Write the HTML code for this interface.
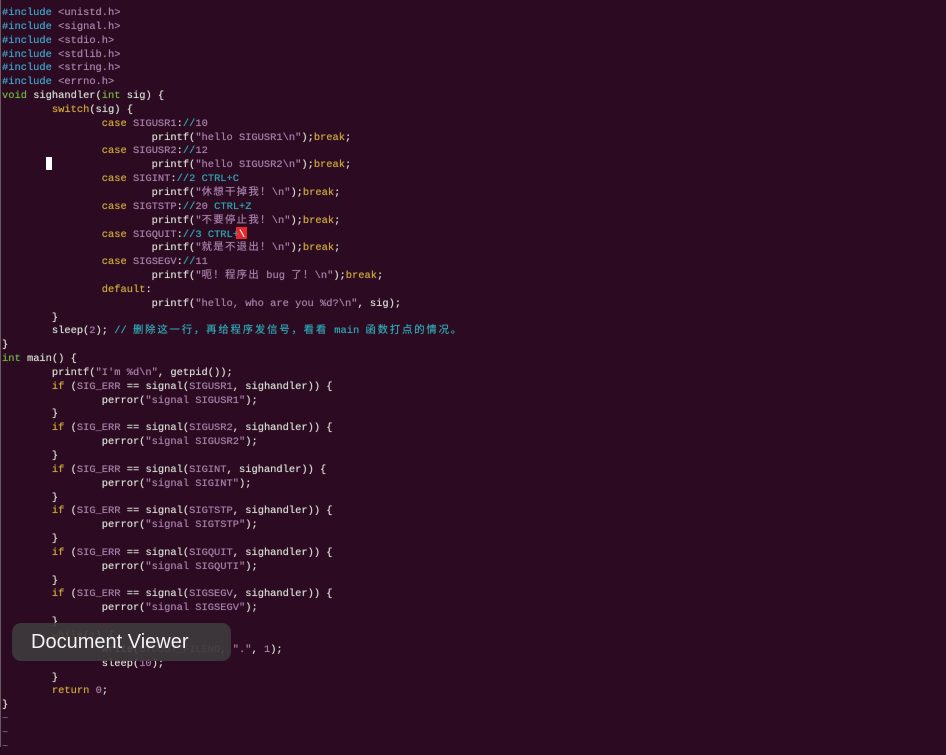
<!DOCTYPE html>
<html><head><meta charset="utf-8"><style>
html,body{margin:0;padding:0;}
body{width:946px;height:747px;background:#2c0b22;position:relative;overflow:hidden;}
.edge{position:absolute;left:0;top:0;width:1px;height:747px;background:#6b5a66;}
pre{position:absolute;left:2px;top:7px;margin:0;font-family:"Liberation Mono","Noto Sans CJK SC",monospace;font-size:10.4px;line-height:13.84px;color:#d3d7cf;text-shadow:0 0 0.6px currentColor;}
.p{color:#3f9fc6}.h{color:#a77fa8}.t{color:#6db33f}.k{color:#c8a43a}.s{color:#a37ca6}.m{color:#2fa3b0}.c{letter-spacing:1.8px}.d{letter-spacing:1.3px}.g{color:#6a5a8a}
.cur{position:absolute;left:46px;top:157px;width:6px;height:13px;background:#fff;}
.red{position:absolute;left:236px;top:227px;width:11px;height:12px;background:#e8272a;}
.tip{position:absolute;left:12px;top:623px;width:219px;height:38px;border-radius:9px;background:rgba(62,58,60,0.9);color:#f2f2f2;font-family:"Liberation Sans","DejaVu Sans",sans-serif;font-size:20px;line-height:38px;padding-left:19px;box-sizing:border-box;}
</style></head><body>
<div class="edge"></div>
<div class="red"></div>
<pre><span class="p">#include</span> <span class="h">&lt;unistd.h&gt;</span>
<span class="p">#include</span> <span class="h">&lt;signal.h&gt;</span>
<span class="p">#include</span> <span class="h">&lt;stdio.h&gt;</span>
<span class="p">#include</span> <span class="h">&lt;stdlib.h&gt;</span>
<span class="p">#include</span> <span class="h">&lt;string.h&gt;</span>
<span class="p">#include</span> <span class="h">&lt;errno.h&gt;</span>
<span class="t">void</span> sighandler(<span class="t">int</span> sig) {
        <span class="k">switch</span>(sig) {
                <span class="k">case</span> <span class="s">SIGUSR1</span>:<span class="m">//</span><span class="s">10</span>
                        printf(<span class="s">"hello SIGUSR1\n"</span>);<span class="k">break</span>;
                <span class="k">case</span> <span class="s">SIGUSR2</span>:<span class="m">//</span><span class="s">12</span>
                        printf(<span class="s">"hello SIGUSR2\n"</span>);<span class="k">break</span>;
                <span class="k">case</span> <span class="s">SIGINT</span>:<span class="m">//2 CTRL+C</span>
                        printf(<span class="s">"<span class="d">休想干掉我！</span>\n"</span>);<span class="k">break</span>;
                <span class="k">case</span> <span class="s">SIGTSTP</span>:<span class="m">//</span><span class="s">20</span> <span class="m">CTRL+Z</span>
                        printf(<span class="s">"<span class="d">不要停止我！</span>\n"</span>);<span class="k">break</span>;
                <span class="k">case</span> <span class="s">SIGQUIT</span>:<span class="m">//3 CTRL+</span><span style="color:#fff">\</span>
                        printf(<span class="s">"<span class="d">就是不退出！</span>\n"</span>);<span class="k">break</span>;
                <span class="k">case</span> <span class="s">SIGSEGV</span>:<span class="m">//</span><span class="s">11</span>
                        printf(<span class="s">"<span class="d">呃！程序出</span> bug <span class="d">了！</span>\n"</span>);<span class="k">break</span>;
                <span class="k">default</span>:
                        printf(<span class="s">"hello, who are you %d?\n"</span>, sig);
        }
        sleep(<span class="s">2</span>); <span class="m">// <span class="c">删除这一行，再给程序发信号，看看</span> main <span class="c">函数打点的情况。</span></span>
}
<span class="t">int</span> main() {
        printf(<span class="s">"I'm %d\n"</span>, getpid());
        <span class="k">if</span> (<span class="s">SIG_ERR</span> == signal(<span class="s">SIGUSR1</span>, sighandler)) {
                perror(<span class="s">"signal SIGUSR1"</span>);
        }
        <span class="k">if</span> (<span class="s">SIG_ERR</span> == signal(<span class="s">SIGUSR2</span>, sighandler)) {
                perror(<span class="s">"signal SIGUSR2"</span>);
        }
        <span class="k">if</span> (<span class="s">SIG_ERR</span> == signal(<span class="s">SIGINT</span>, sighandler)) {
                perror(<span class="s">"signal SIGINT"</span>);
        }
        <span class="k">if</span> (<span class="s">SIG_ERR</span> == signal(<span class="s">SIGTSTP</span>, sighandler)) {
                perror(<span class="s">"signal SIGTSTP"</span>);
        }
        <span class="k">if</span> (<span class="s">SIG_ERR</span> == signal(<span class="s">SIGQUIT</span>, sighandler)) {
                perror(<span class="s">"signal SIGQUTI"</span>);
        }
        <span class="k">if</span> (<span class="s">SIG_ERR</span> == signal(<span class="s">SIGSEGV</span>, sighandler)) {
                perror(<span class="s">"signal SIGSEGV"</span>);
        }
        <span class="k">while</span>(<span class="s">1</span>) {
                write(<span class="s">STDOUT_FILENO</span>, <span class="s">"."</span>, <span class="s">1</span>);
                sleep(<span class="s">10</span>);
        }
        <span class="k">return</span> <span class="s">0</span>;
}
<span class="g">~</span>
<span class="g">~</span>
<span class="g">~</span></pre>
<div class="cur"></div>
<div class="tip">Document Viewer</div>
</body></html>
